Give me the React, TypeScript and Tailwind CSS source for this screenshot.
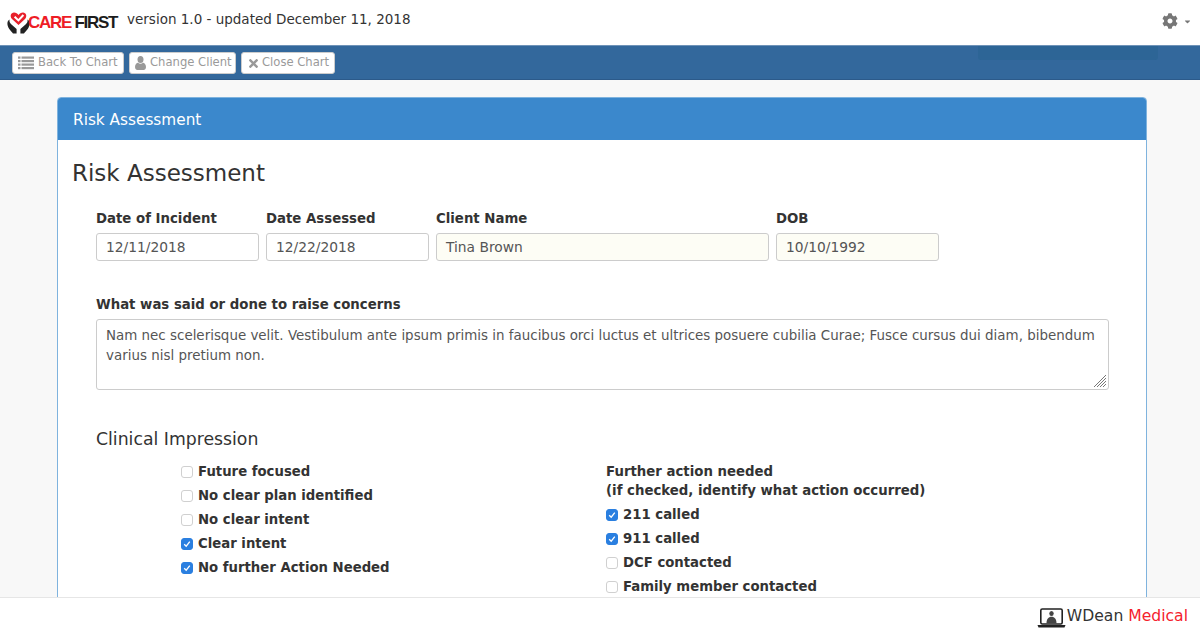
import React from "react";
import { FaTimes, FaCog, FaCaretDown } from "react-icons/fa";

const font = "font-['DejaVu_Sans',Verdana,sans-serif]";

function Logo() {
  return (
    <div className="flex items-center">
      <svg width="23" height="22" viewBox="0 0 23 22" className="shrink-0">
        <path d="M11.5 13 L5 7 C2.4 4.4 4 0.6 7 0.6 C9 0.6 10.5 1.6 11.5 3 C12.5 1.6 14 0.6 16 0.6 C19 0.6 20.6 4.4 18 7 Z" fill="#e8202a" />
        <path d="M7.6 4.8 L11.4 8.4 L16.4 3" fill="none" stroke="#fff" strokeWidth="2" />
        <path d="M2.6 7.5 C2 9.5 3 11 4.2 12.2 L9.6 17 L9.6 21.5 L6 21.5 C3.5 18.5 0.4 15.5 0.4 11.5 C0.4 9.6 1.2 8.2 2.6 7.5 Z" fill="#222" />
        <path d="M20.4 7.5 C21 9.5 20 11 18.8 12.2 L13.4 17 L13.4 21.5 L17 21.5 C19.5 18.5 22.6 15.5 22.6 11.5 C22.6 9.6 21.8 8.2 20.4 7.5 Z" fill="#222" />
      </svg>
      <span className="ml-[-2px] font-['Liberation_Sans',sans-serif] text-[17px] font-bold tracking-[-1.3px] whitespace-nowrap text-[#ee1c25]">
        CARE <span className="text-[#1c1c1c]">FIRST</span>
      </span>
    </div>
  );
}

function ListIcon() {
  return (
    <svg width="16" height="14" viewBox="0 0 16 14" fill="#999">
      <rect x="0" y="0.5" width="2.5" height="2.2" />
      <rect x="3.5" y="0.5" width="12.5" height="2.2" />
      <rect x="0" y="4" width="2.5" height="2.2" />
      <rect x="3.5" y="4" width="12.5" height="2.2" />
      <rect x="0" y="7.5" width="2.5" height="2.2" />
      <rect x="3.5" y="7.5" width="12.5" height="2.2" />
      <rect x="0" y="11" width="2.5" height="2.2" />
      <rect x="3.5" y="11" width="12.5" height="2.2" />
    </svg>
  );
}

function UserIcon() {
  return (
    <svg width="11" height="14" viewBox="0 0 11 14" fill="#999">
      <ellipse cx="5.5" cy="3.6" rx="3" ry="3.5" />
      <path d="M0 11 C0 8.2 1.6 7 3 6.8 C4.4 8 6.6 8 8 6.8 C9.4 7 11 8.2 11 11 C11 13 9.8 14 8.6 14 H2.4 C1.2 14 0 13 0 11 Z" />
    </svg>
  );
}

function BarButton({ icon, label, width }: { icon: React.ReactNode; label: string; width: string }) {
  return (
    <button className={`flex h-[22px] items-center rounded-[3px] border border-[#ccc] bg-white pl-[5px] text-[11.6px] whitespace-nowrap text-[#9a9a9a] ${width}`}>
      {icon}
      {label}
    </button>
  );
}

function Field({ label, value, width, tinted }: { label: string; value: string; width: string; tinted?: boolean }) {
  return (
    <div className={`flex flex-col gap-[4px] ${width}`}>
      <label className="text-[13.3px] leading-[20px] font-bold text-[#333]">{label}</label>
      <div className={`flex h-[28px] items-center rounded-[3px] border border-[#ccc] px-[9px] text-[13.8px] text-[#555] ${tinted ? "bg-[#fdfdf5]" : "bg-white"}`}>
        {value}
      </div>
    </div>
  );
}

function Check({ label, checked }: { label: string; checked?: boolean }) {
  return (
    <div className="flex h-[24px] items-center gap-[5px] text-[13.25px] font-bold whitespace-nowrap text-[#333]">
      <span className={`flex h-[12px] w-[12px] shrink-0 items-center justify-center rounded-[3px] border ${checked ? "border-[#2a7fe0] bg-[#2a7fe0]" : "border-[#d0d0d0] bg-white"}`}>
        {checked && (
          <svg width="8" height="8" viewBox="0 0 8 8">
            <path d="M1.2 4.2 L3.2 6.2 L6.8 1.6" fill="none" stroke="#fff" strokeWidth="1.3" />
          </svg>
        )}
      </span>
      {label}
    </div>
  );
}

export default function App() {
  return (
    <div className={`flex h-[633px] w-[1200px] flex-col overflow-hidden bg-[#f8f8f8] ${font}`}>
      <header className="flex h-[45px] shrink-0 items-center justify-between bg-white pr-[8px] pl-[7px]">
        <div className="flex items-center gap-[10px]">
          <Logo />
          <span className="relative top-[-3px] text-[13.5px] whitespace-nowrap text-[#333]">version 1.0 - updated December 11, 2018</span>
        </div>
        <div className="flex items-center gap-[5px] pb-[3px] text-[#777]">
          <FaCog size={16} />
          <FaCaretDown size={9} />
        </div>
      </header>

      <nav className="relative flex h-[35px] shrink-0 items-center gap-[5px] border-t border-b border-t-[#6f93b8] border-b-[#2c5a8a] bg-[#33689c] pt-[1px] pl-[12px]">
        <BarButton icon={<span className="mr-[4px]"><ListIcon /></span>} label="Back To Chart" width="w-[112px]" />
        <BarButton icon={<span className="mr-[4px]"><UserIcon /></span>} label="Change Client" width="w-[107px]" />
        <BarButton icon={<FaTimes size={13} className="mr-[2px] text-[#999]" />} label="Close Chart" width="w-[94px]" />
        <div className="absolute top-0 left-[978px] h-[14px] w-[180px] rounded-b-[3px] bg-[#2d6596]" />
      </nav>

      <main className="min-h-0 flex-1 overflow-hidden pt-[17px] pr-[53px] pl-[57px]">
        <section className="h-[560px] rounded-t-[4px] border border-[#7fb3de] bg-white">
          <div className="flex h-[42px] items-center rounded-t-[3px] bg-[#3b88cc] px-[15px] pt-[3px] text-[15.3px] text-white">Risk Assessment</div>
          <div className="px-[14px] pt-[17px]">
            <h1 className="text-[23px] leading-[32px] text-[#333]">Risk Assessment</h1>
            <div className="pt-[20px] pr-[23px] pl-[24px]">
              <div className="flex gap-[7px]">
                <Field label="Date of Incident" value="12/11/2018" width="w-[163px]" />
                <Field label="Date Assessed" value="12/22/2018" width="w-[163px]" />
                <Field label="Client Name" value="Tina Brown" width="w-[333px]" tinted />
                <Field label="DOB" value="10/10/1992" width="w-[163px]" tinted />
              </div>
              <label className="mt-[34px] block text-[13.3px] leading-[20px] font-bold text-[#333]">What was said or done to raise concerns</label>
              <div className="relative mt-[4px] h-[71px] rounded-[3px] border border-[#ccc] bg-white px-[9px] py-[6px] text-[13.43px] leading-[20px] text-[#555]">
                Nam nec scelerisque velit. Vestibulum ante ipsum primis in faucibus orci luctus et ultrices posuere cubilia Curae; Fusce cursus dui diam, bibendum varius nisl pretium non.
                <svg width="14" height="14" viewBox="0 0 14 14" className="absolute right-[1px] bottom-[1px]">
                  <path d="M13 1 L1 13 M13 4 L4 13 M13 7 L7 13 M13 10 L10 13" stroke="#777" strokeWidth="1" />
                </svg>
              </div>
              <h2 className="mt-[37px] text-[17.3px] leading-[24px] text-[#333]">Clinical Impression</h2>
              <div className="mt-[9px] flex">
                <div className="ml-[85px] w-[425px]">
                  <Check label="Future focused" />
                  <Check label="No clear plan identified" />
                  <Check label="No clear intent" />
                  <Check label="Clear intent" checked />
                  <Check label="No further Action Needed" checked />
                </div>
                <div>
                  <p className="pt-[2px] text-[13.3px] leading-[19px] font-bold whitespace-nowrap text-[#333]">
                    Further action needed<br />(if checked, identify what action occurred)
                  </p>
                  <div className="pt-[3px]">
                    <Check label="211 called" checked />
                    <Check label="911 called" checked />
                    <Check label="DCF contacted" />
                    <Check label="Family member contacted" />
                  </div>
                </div>
              </div>
            </div>
          </div>
        </section>
      </main>

      <footer className="flex h-[36px] shrink-0 items-center justify-end border-t border-[#e6e6e6] bg-white pt-[3px] pr-[12px]">
        <svg width="29" height="20" viewBox="0 0 29 20" className="mt-[2px]">
          <rect x="3.8" y="1" width="21.4" height="15" rx="1.5" fill="none" stroke="#222" strokeWidth="1.6" />
          <ellipse cx="14.5" cy="5.5" rx="2.2" ry="2.6" fill="#444" />
          <path d="M9.5 15.5 C9.5 11 11.5 8.8 14.5 8.8 C17.5 8.8 19.5 11 19.5 15.5 Z" fill="#444" />
          <path d="M0.5 17 H28.5 L27.5 19.5 H1.5 Z" fill="#222" />
        </svg>
        <span className="ml-[1px] text-[15.6px] whitespace-nowrap text-[#333]">WDean <span className="text-[#f5222d]">Medical</span></span>
      </footer>
    </div>
  );
}
